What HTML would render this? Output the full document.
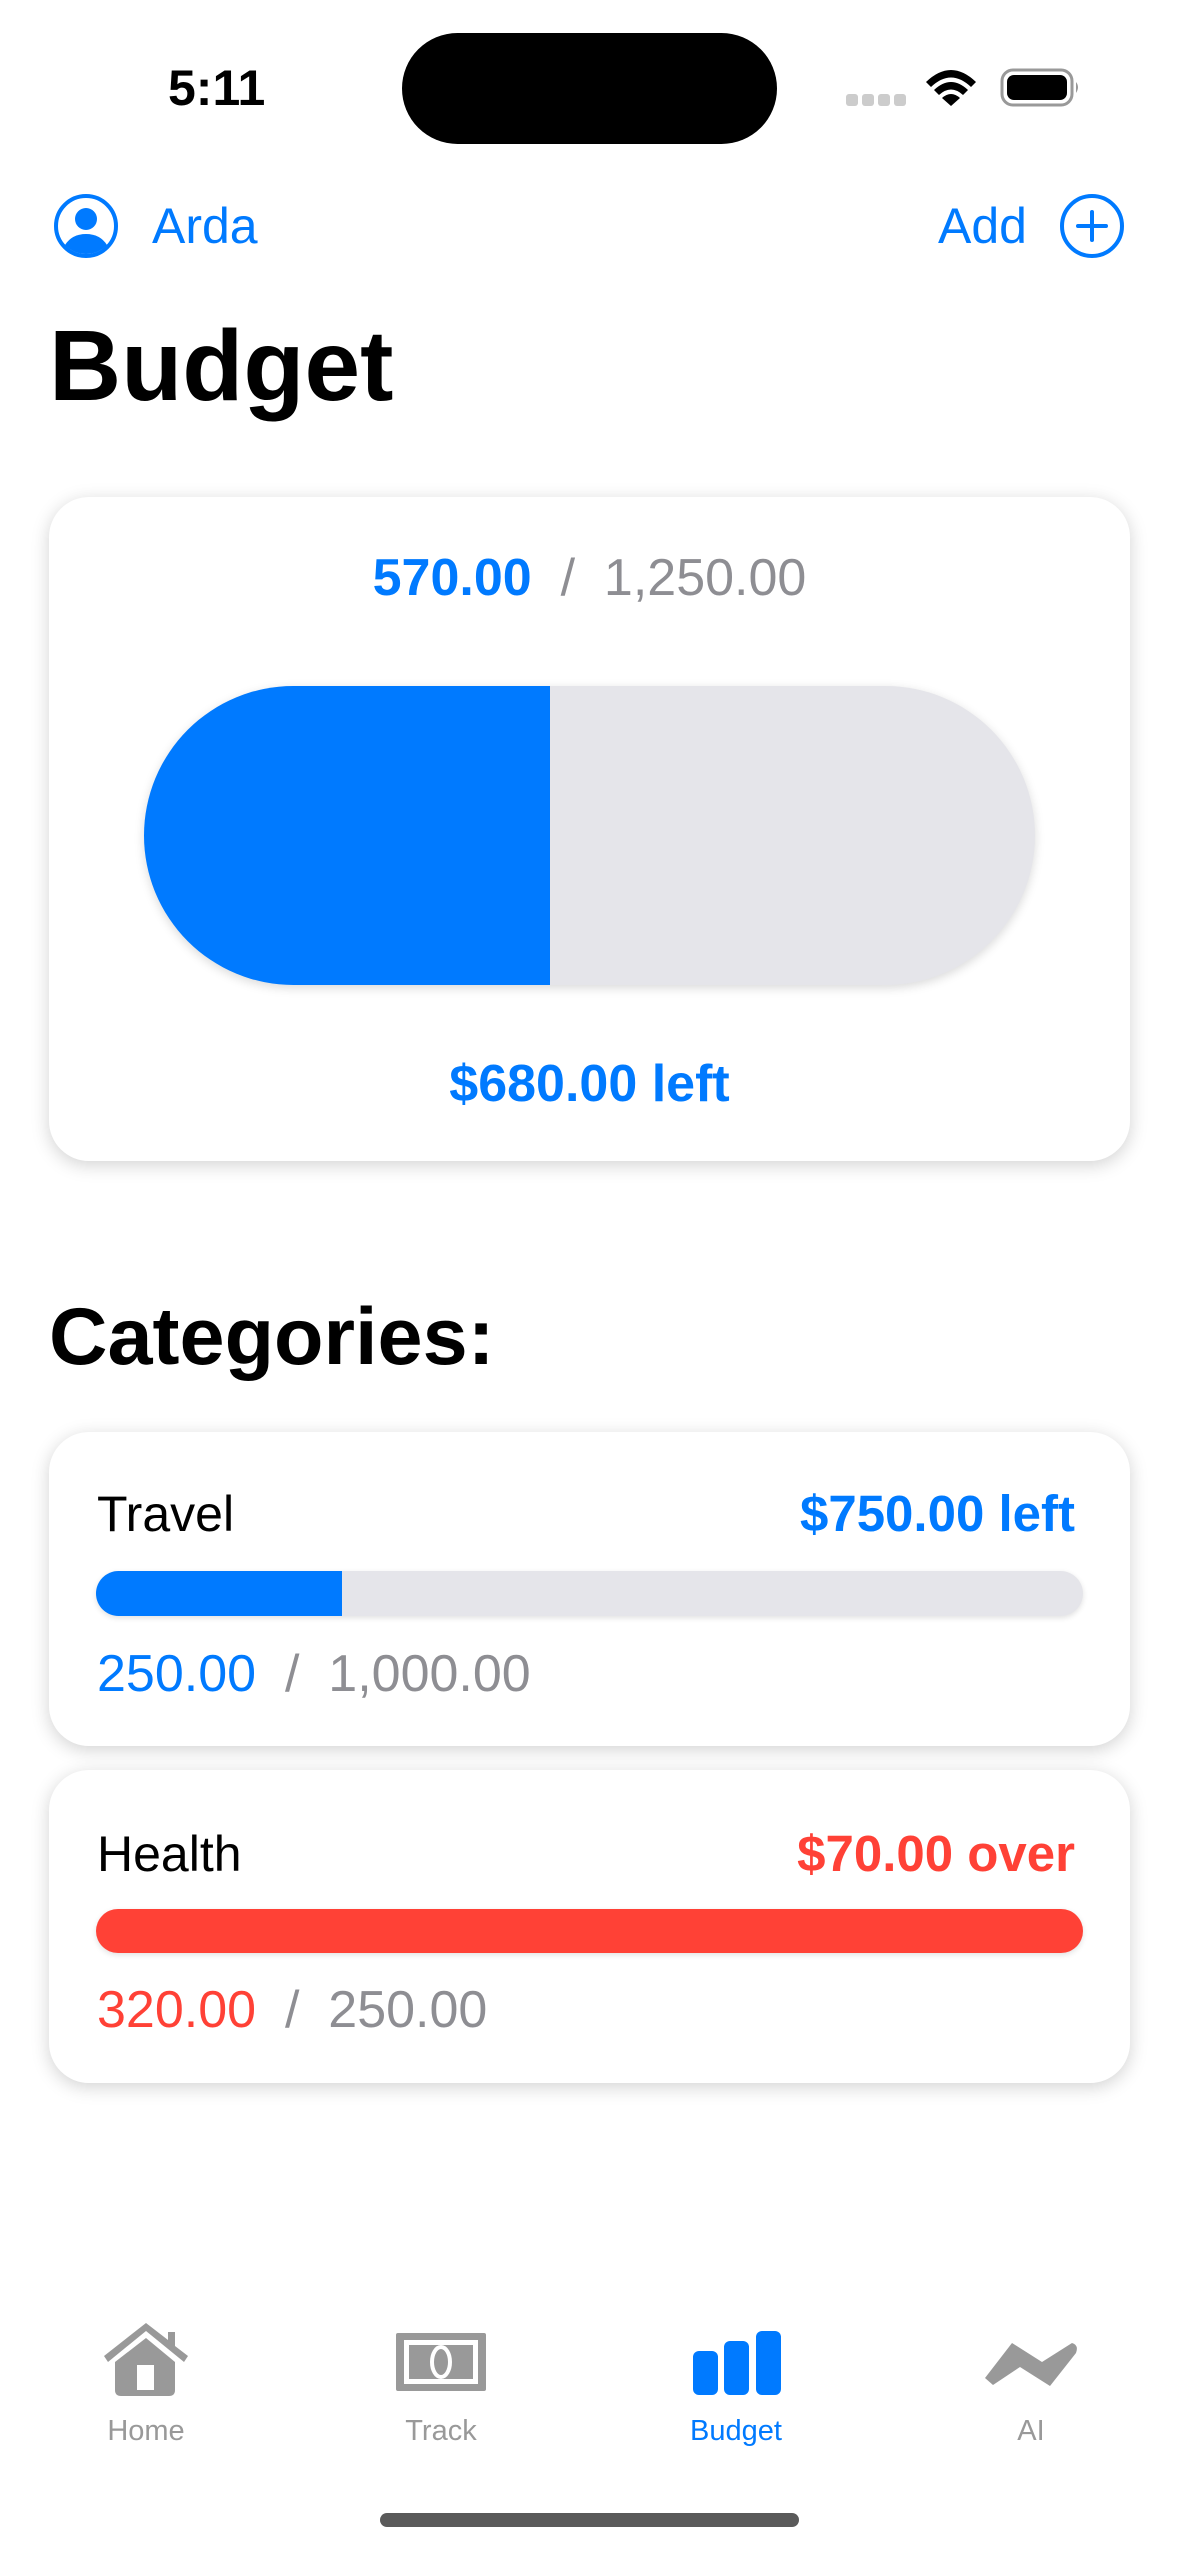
<!DOCTYPE html>
<html><head><meta charset="utf-8"><style>
*{margin:0;padding:0;box-sizing:border-box}
body{width:1179px;height:2556px;background:#fff;position:relative;overflow:hidden;font-family:"Liberation Sans",sans-serif}
.a{position:absolute;white-space:nowrap}
.card{position:absolute;left:49px;width:1081px;background:#fff;border-radius:40px;box-shadow:0 4px 18px rgba(0,0,0,0.18)}
.blue{color:#007AFF}.red{color:#FF4136}.gray{color:#8E8E93}
</style></head><body>
<div class="a" style="left:168px;top:56px;font-size:50px;font-weight:bold;line-height:64px">5:11</div>
<div class="a" style="left:402px;top:33px;width:375px;height:111px;background:#000;border-radius:56px"></div>
<svg class="a" style="left:840px;top:50px" width="300" height="70" viewBox="0 0 300 70">
<g fill="#ccc"><rect x="6" y="44" width="12" height="12" rx="3"/><rect x="22" y="44" width="12" height="12" rx="3"/><rect x="38" y="44" width="12" height="12" rx="3"/><rect x="54" y="44" width="12" height="12" rx="3"/></g>
<path d="M86 32 Q111 8 136 32 L131 37 Q111 18 91 37Z M94 40 Q111 24 128 40 L123 45 Q111 34 99 45Z M102 48 Q111 40 120 48 L111 56Z" fill="#000"/>
<rect x="162" y="20" width="70" height="35" rx="11" fill="none" stroke="#999" stroke-width="3"/>
<rect x="167" y="25" width="60" height="25" rx="7" fill="#000"/>
<path d="M236 32 Q240 37 236 43Z" fill="#999"/>
</svg>
<svg class="a" style="left:52px;top:192px" width="68" height="68" viewBox="0 0 68 68">
<circle cx="34" cy="34" r="30" fill="none" stroke="#007AFF" stroke-width="4"/>
<circle cx="34" cy="27" r="11" fill="#007AFF"/>
<path d="M13 53 Q20 42 34 42 Q48 42 55 53 Q46 62 34 62 Q22 62 13 53Z" fill="#007AFF"/>
</svg>
<div class="a blue" style="left:152px;top:198px;font-size:50px;line-height:56px">Arda</div>
<div class="a blue" style="left:938px;top:198px;font-size:50px;line-height:56px">Add</div>
<svg class="a" style="left:1058px;top:192px" width="68" height="68" viewBox="0 0 68 68">
<circle cx="34" cy="34" r="30" fill="none" stroke="#007AFF" stroke-width="4"/>
<path d="M34 20V48M20 34H48" stroke="#007AFF" stroke-width="4" stroke-linecap="round"/>
</svg>
<div class="a" style="left:49px;top:311px;font-size:100px;font-weight:bold;line-height:110px">Budget</div>

<div class="card" style="top:497px;height:664px"></div>
<div class="a" style="left:0;width:1179px;top:548px;text-align:center;font-size:52px;line-height:60px"><span class="blue" style="font-weight:bold">570.00</span><span class="gray">&nbsp; / &nbsp;1,250.00</span></div>
<div class="a" style="left:144px;top:686px;width:891px;height:299px;border-radius:150px;background:#E5E5EA;overflow:hidden;box-shadow:0 3px 10px rgba(0,0,0,0.15)"><div style="width:406px;height:100%;background:#007AFF"></div></div>
<div class="a blue" style="left:0;width:1179px;top:1054px;text-align:center;font-size:52px;font-weight:bold;line-height:60px">$680.00 left</div>

<div class="a" style="left:49px;top:1292px;font-size:81px;font-weight:bold;line-height:90px">Categories:</div>

<div class="card" style="top:1432px;height:314px"></div>
<div class="a" style="left:97px;top:1486px;font-size:50px;line-height:56px">Travel</div>
<div class="a blue" style="right:104px;top:1486px;font-size:51px;font-weight:bold;line-height:56px">$750.00 left</div>
<div class="a" style="left:96px;top:1571px;width:987px;height:45px;border-radius:23px;background:#E5E5EA;overflow:hidden;box-shadow:0 2px 6px rgba(0,0,0,0.12)"><div style="width:246px;height:100%;background:#007AFF"></div></div>
<div class="a" style="left:97px;top:1646px;font-size:52px;line-height:56px"><span class="blue">250.00</span><span class="gray">&nbsp; / &nbsp;1,000.00</span></div>

<div class="card" style="top:1770px;height:313px"></div>
<div class="a" style="left:97px;top:1826px;font-size:50px;line-height:56px">Health</div>
<div class="a red" style="right:104px;top:1826px;font-size:51px;font-weight:bold;line-height:56px">$70.00 over</div>
<div class="a" style="left:96px;top:1909px;width:987px;height:44px;border-radius:22px;background:#FF4136;box-shadow:0 2px 6px rgba(0,0,0,0.12)"></div>
<div class="a" style="left:97px;top:1982px;font-size:52px;line-height:56px"><span class="red">320.00</span><span class="gray">&nbsp; / &nbsp;250.00</span></div>

<svg class="a" style="left:0;top:2310px" width="1179" height="100" viewBox="0 2310 1179 100">
<g fill="#999">
<path d="M146 2323 L104 2356 L108 2362 L146 2331 L184 2362 L188 2356 L175 2346 L175 2332 L168 2332 L168 2340Z"/>
<path d="M146 2338 L115 2362 L115 2390 Q115 2396 121 2396 L169 2396 Q175 2396 175 2390 L175 2362Z"/>
<rect x="396" y="2333" width="90" height="58" rx="2"/>
<path d="M985 2378 L1012 2343 L1042 2362 L1072 2343 Q1079 2345 1076 2353 L1050 2386 L1020 2367 L993 2385 Z"/>
</g>
<rect x="137" y="2365" width="17" height="25" fill="#fff"/>
<rect x="404" y="2340" width="74" height="44" fill="#fff"/>
<rect x="409" y="2345" width="64" height="34" fill="#999"/>
<ellipse cx="441" cy="2362" rx="9" ry="15" fill="none" stroke="#fff" stroke-width="4"/>
<g fill="#007AFF">
<rect x="693" y="2351" width="25" height="44" rx="6"/>
<rect x="724" y="2341" width="25" height="54" rx="6"/>
<rect x="756" y="2331" width="25" height="64" rx="6"/>
</g>
</svg>
<div class="a" style="left:46px;width:200px;top:2414px;text-align:center;font-size:29px;line-height:34px;color:#999">Home</div>
<div class="a" style="left:341px;width:200px;top:2414px;text-align:center;font-size:29px;line-height:34px;color:#999">Track</div>
<div class="a" style="left:636px;width:200px;top:2414px;text-align:center;font-size:29px;line-height:34px;color:#007AFF">Budget</div>
<div class="a" style="left:931px;width:200px;top:2414px;text-align:center;font-size:29px;line-height:34px;color:#999">AI</div>
<div class="a" style="left:380px;top:2513px;width:419px;height:14px;border-radius:7px;background:#5a5a5a"></div>
</body></html>
